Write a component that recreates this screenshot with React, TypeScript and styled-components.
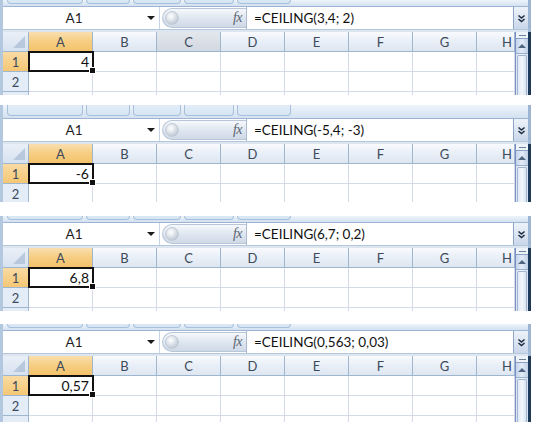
import React from 'react'
import styled, { createGlobalStyle, css } from 'styled-components'

const GlobalStyle = createGlobalStyle`
  html, body {
    margin: 0;
    padding: 0;
    background: #ffffff;
  }
  body {
    font-family: Lato, "Open Sans", sans-serif;
  }
`

const Page = styled.div`
  display: flex;
  flex-direction: column;
  width: 547px;
  height: 437px;
  background: #ffffff;
  overflow: hidden;
`

const Panel = styled.section<{ $top: number }>`
  display: flex;
  flex-direction: column;
  width: 531px;
  margin-top: ${({ $top }) => $top}px;
  border-left: 3px solid #b3c7df;
  box-sizing: border-box;
`

const Ribbon = styled.div<{ $h: number }>`
  display: flex;
  align-items: flex-end;
  gap: 3px;
  height: ${({ $h }) => $h}px;
  padding-left: 4px;
  overflow: hidden;
  background: linear-gradient(#eef4fb, #d3e1f1);
  border-right: 3px solid #9db5d3;
  border-bottom: 1px solid #9db4d4;
`

const RibbonTab = styled.div<{ $w: number }>`
  flex: 0 0 ${({ $w }) => $w}px;
  height: 14px;
  margin-bottom: 2px;
  border: 1px solid #a8bfd9;
  border-top: none;
  border-radius: 0 0 4px 4px;
  background: linear-gradient(#e6eff9, #d7e5f4);
  box-sizing: border-box;
`

const FormulaBar = styled.div`
  display: flex;
  align-items: stretch;
  height: 22px;
  background: #ffffff;
  border-right: 3px solid #9db5d3;
`

const NameBox = styled.div`
  position: relative;
  display: flex;
  align-items: center;
  justify-content: center;
  width: 157px;
  font-size: 13.5px;
  color: #1e1e1e;
  background: #ffffff;
  border-right: 1px solid #c8d5e6;
  box-sizing: border-box;
  padding-right: 14px;
`

const DropArrow = styled.span`
  position: absolute;
  right: 4px;
  top: 9px;
  width: 0;
  height: 0;
  border-left: 4px solid transparent;
  border-right: 4px solid transparent;
  border-top: 4px solid #1b1b1b;
`

const FxPill = styled.div`
  display: flex;
  align-items: center;
  justify-content: space-between;
  width: 84px;
  margin: 1px 0 1px 2px;
  padding: 0 4px 0 2px;
  border-radius: 10px 0 0 10px;
  border: 1px solid #b7c6d9;
  border-right: none;
  background: linear-gradient(#f6f8fb, #dde5ef 55%, #cfd9e6);
  box-sizing: border-box;
`

const Knob = styled.span`
  width: 14px;
  height: 14px;
  border-radius: 50%;
  background: radial-gradient(circle at 40% 35%, #ffffff 0, #e3e8ee 35%, #a9b5c4 100%);
  border: 1px solid #c2ccd8;
  box-sizing: border-box;
`

const Fx = styled.span`
  font-family: "Liberation Serif", "DejaVu Serif", serif;
  font-style: italic;
  font-size: 14px;
  color: #5a6470;
  letter-spacing: -0.5px;
`

const FormulaInput = styled.div`
  flex: 1;
  display: flex;
  align-items: center;
  padding-left: 7px;
  font-size: 13.5px;
  color: #111111;
  background: #ffffff;
  border-left: 1px solid #a9bbd3;
`

const ExpandButton = styled.div`
  display: flex;
  align-items: center;
  justify-content: center;
  width: 15px;
  background: linear-gradient(#eef3fa, #c9d7ea);
  border-left: 1px solid #8ea6c6;
  box-sizing: border-box;
`

const Divider = styled.div`
  height: 3px;
  background: #dde5ef;
  border-top: 1px solid #b5c7dd;
  border-right: 3px solid #9db5d3;
  box-sizing: border-box;
`

const Sheet = styled.div<{ $h: number }>`
  display: flex;
  height: ${({ $h }) => $h}px;
  overflow: hidden;
  border-right: 3px solid #1f3958;
`

const Grid = styled.div`
  display: grid;
  grid-template-columns: 26px repeat(7, 64px) 38px;
  grid-auto-rows: 20px;
  align-content: start;
  width: 512px;
`

const headerBase = css`
  display: flex;
  align-items: center;
  justify-content: center;
  font-size: 13px;
  color: #3c4a5c;
  border-right: 1px solid #9eb6ce;
  border-bottom: 1px solid #9eb6ce;
  box-sizing: border-box;
`

const Corner = styled.div`
  ${headerBase};
  position: relative;
  background: linear-gradient(#e9eff7, #d7e2f0);
  &::after {
    content: '';
    position: absolute;
    right: 3px;
    bottom: 3px;
    border-left: 12px solid transparent;
    border-bottom: 12px solid #b8c9de;
  }
`

const ColHeader = styled.div<{ $state?: 'active' | 'hover' }>`
  ${headerBase};
  background: ${({ $state }) =>
    $state === 'active'
      ? 'linear-gradient(#f9dfae, #f6cd82 50%, #f3c36a)'
      : $state === 'hover'
        ? 'linear-gradient(#e3e7ed, #d2d8e1)'
        : 'linear-gradient(#f8fafd, #e9eff7 50%, #dee6f1)'};
  justify-content: ${({ children }) => (children === 'H' ? 'flex-end' : 'center')};
  padding-right: ${({ children }) => (children === 'H' ? '2px' : '0')};
`

const RowHeader = styled.div<{ $active?: boolean }>`
  ${headerBase};
  background: ${({ $active }) =>
    $active ? 'linear-gradient(#f9dba3, #f4c774)' : '#e4ecf7'};
`

const Cell = styled.div`
  border-right: 1px solid #d4dbe6;
  border-bottom: 1px solid #d4dbe6;
  box-sizing: border-box;
`

const ActiveCell = styled.div`
  position: relative;
  display: flex;
  align-items: center;
  justify-content: flex-end;
  padding-right: 3px;
  font-size: 14px;
  color: #111111;
  border: 2px solid #111111;
  margin: -1px -1px 0 -1px;
  box-sizing: border-box;
  z-index: 1;
  &::after {
    content: '';
    position: absolute;
    right: -4px;
    bottom: -4px;
    width: 5px;
    height: 5px;
    background: #111111;
    border: 1px solid #ffffff;
  }
`

const ScrollBar = styled.div`
  display: flex;
  flex-direction: column;
  width: 13px;
  background: linear-gradient(90deg, #dbe5f2, #eef3fa 50%, #d7e2f0);
  border-left: 1px solid #7d8fc6;
  box-sizing: border-box;
`

const SplitBox = styled.div`
  display: flex;
  align-items: center;
  justify-content: center;
  height: 6px;
  background: #eef3fa;
  border-bottom: 1px solid #8aa1c2;
  &::before {
    content: '';
    width: 7px;
    height: 1px;
    background: #6d7f99;
  }
`

const ArrowButton = styled.div`
  display: flex;
  align-items: center;
  justify-content: center;
  height: 14px;
  background: linear-gradient(90deg, #c3d4ea, #e3ecf7 50%, #bfd0e7);
  border-bottom: 1px solid #9db2cf;
  &::before {
    content: '';
    border-left: 4px solid transparent;
    border-right: 4px solid transparent;
    border-bottom: 4px solid #4f6582;
  }
`

const Thumb = styled.div`
  flex: 1;
  margin: 1px 1px 0;
  border: 1px solid #a2b6d1;
  border-bottom: none;
  border-radius: 2px 2px 0 0;
  background: linear-gradient(90deg, #dfe8f4, #f3f7fc 50%, #d9e4f2);
`

const columns = ['A', 'B', 'C', 'D', 'E', 'F', 'G', 'H']

type PanelData = {
  top: number
  ribbon: number
  body: number
  formula: string
  value: string
  hoverC?: boolean
}

const panels: PanelData[] = [
  { top: 0, ribbon: 6, body: 63, formula: '=CEILING(3,4; 2)', value: '4', hoverC: true },
  { top: 10, ribbon: 13, body: 58, formula: '=CEILING(-5,4; -3)', value: '-6' },
  { top: 14, ribbon: 6, body: 63, formula: '=CEILING(6,7; 0,2)', value: '6,8' },
  { top: 13, ribbon: 6, body: 66, formula: '=CEILING(0,563; 0,03)', value: '0,57' },
]

const tabs = [76, 44, 48, 50, 54]

const Chevrons = () => (
  <svg width="9" height="9" viewBox="0 0 9 9">
    <path d="M1.5 1.5 L4.5 4 L7.5 1.5 M1.5 5 L4.5 7.5 L7.5 5" fill="none" stroke="#1b2a3e" strokeWidth="1.5" />
  </svg>
)

const SheetPanel: React.FC<{ data: PanelData }> = ({ data }) => (
  <Panel $top={data.top}>
    <Ribbon $h={data.ribbon}>
      {tabs.map((w, i) => (
        <RibbonTab key={i} $w={w} />
      ))}
    </Ribbon>
    <FormulaBar>
      <NameBox>
        A1
        <DropArrow />
      </NameBox>
      <FxPill>
        <Knob />
        <Fx>fx</Fx>
      </FxPill>
      <FormulaInput>{data.formula}</FormulaInput>
      <ExpandButton>
        <Chevrons />
      </ExpandButton>
    </FormulaBar>
    <Divider />
    <Sheet $h={data.body}>
      <Grid>
        <Corner />
        {columns.map((c) => (
          <ColHeader
            key={c}
            $state={c === 'A' ? 'active' : c === 'C' && data.hoverC ? 'hover' : undefined}
          >
            {c}
          </ColHeader>
        ))}
        {[1, 2, 3].map((r) => (
          <React.Fragment key={r}>
            <RowHeader $active={r === 1}>{r < 3 ? r : ''}</RowHeader>
            {columns.map((c) =>
              r === 1 && c === 'A' ? (
                <ActiveCell key={c}>{data.value}</ActiveCell>
              ) : (
                <Cell key={c} />
              ),
            )}
          </React.Fragment>
        ))}
      </Grid>
      <ScrollBar>
        <SplitBox />
        <ArrowButton />
        <Thumb />
      </ScrollBar>
    </Sheet>
  </Panel>
)

const App: React.FC = () => (
  <Page>
    <GlobalStyle />
    {panels.map((p, i) => (
      <SheetPanel key={i} data={p} />
    ))}
  </Page>
)

export default App
